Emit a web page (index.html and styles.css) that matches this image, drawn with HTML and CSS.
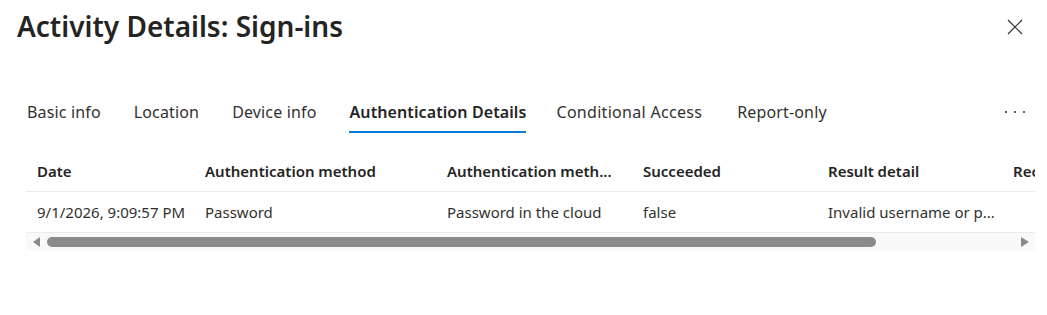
FILE: index.html
```html
<!DOCTYPE html>
<html lang="en">
<head>
<meta charset="utf-8">
<title>Activity Details: Sign-ins</title>
<link rel="stylesheet" href="styles.css">
</head>
<body>
<div class="panel">
  <header class="header">
    <h1 class="title">Activity Details: Sign-ins</h1>
    <button class="close" aria-label="Close">
      <svg width="16" height="16" viewBox="0 0 16 16"><path d="M1 1L15 15M15 1L1 15" stroke="#323130" stroke-width="1.2" fill="none"/></svg>
    </button>
  </header>
  <nav class="tabs">
    <span class="tab">Basic info</span>
    <span class="tab">Location</span>
    <span class="tab">Device info</span>
    <span class="tab active">Authentication Details</span>
    <span class="tab wide">Conditional Access</span>
    <span class="tab">Report-only</span>
    <span class="more"><i></i><i></i><i></i></span>
  </nav>
  <div class="grid">
    <div class="row head">
      <div class="c c1">Date</div>
      <div class="c c2">Authentication method</div>
      <div class="c c3">Authentication meth...</div>
      <div class="c c4">Succeeded</div>
      <div class="c c5">Result detail</div>
      <div class="c c6">Rec</div>
    </div>
    <div class="row body">
      <div class="c c1">9/1/2026, 9:09:57 PM</div>
      <div class="c c2">Password</div>
      <div class="c c3">Password in the cloud</div>
      <div class="c c4">false</div>
      <div class="c c5">Invalid username or p...</div>
      <div class="c c6"></div>
    </div>
    <div class="hscroll">
      <span class="arrow left"></span>
      <div class="track"><div class="thumb"></div></div>
      <span class="arrow right"></span>
    </div>
  </div>
</div>
</body>
</html>
```
FILE: styles.css
```css
html, body {
  margin: 0;
  padding: 0;
  background: #ffffff;
}
body {
  font-family: "Noto Sans", "Open Sans", sans-serif;
  color: #323130;
}
.panel {
  width: 1047px;
  height: 315px;
  overflow: hidden;
}
.header {
  display: flex;
  justify-content: space-between;
  align-items: flex-start;
  padding: 6px 24px 0 17px;
  height: 58px;
}
.title {
  margin: 0;
  font-size: 28px;
  font-weight: 600;
  color: #242424;
  line-height: 40px;
}
.close {
  border: 0;
  background: none;
  padding: 0;
  margin-top: 13px;
  width: 16px;
  height: 16px;
  display: flex;
}
.tabs {
  display: flex;
  align-items: stretch;
  margin: 29px 0 0 27px;
  height: 40px;
  width: 998px;
}
.tab {
  font-size: 16px;
  margin-right: 33px;
  line-height: 38px;
  border-bottom: 2px solid transparent;
  white-space: nowrap;
  letter-spacing: 0.15px;
}
.tab.active {
  font-weight: 600;
  color: #242424;
  letter-spacing: 0.1px;
  margin-right: 30px;
  border-bottom-color: #0f7bd8;
}
.tab.wide {
  letter-spacing: 0.3px;
  margin-right: 35px;
}
.more {
  margin-left: auto;
  display: flex;
  gap: 7px;
  align-items: center;
  padding-bottom: 2px;
}
.more i {
  width: 2px;
  height: 2px;
  background: #605e5c;
}
.grid {
  margin: 18px 0 0 26px;
  width: 1009px;
  overflow: hidden;
}
.row {
  display: flex;
  height: 40px;
  align-items: center;
  border-bottom: 1px solid #edebe9;
  font-size: 15px;
  width: 1009px;
}
.row.head {
  font-weight: 600;
  color: #242424;
}
.c {
  padding-left: 11px;
  box-sizing: border-box;
  white-space: nowrap;
  overflow: hidden;
  flex: none;
}
.c1 { width: 168px; }
.c2 { width: 242px; }
.c3 { width: 196px; }
.c4 { width: 185px; }
.c5 { width: 185px; }
.c6 { width: 33px; }
.hscroll {
  display: flex;
  align-items: center;
  height: 17px;
  background: #f9f9f9;
  width: 1009px;
}
.arrow {
  width: 0;
  height: 0;
  border-top: 5px solid transparent;
  border-bottom: 5px solid transparent;
  flex: none;
}
.arrow.left {
  border-right: 7px solid #8a8a8a;
  margin-left: 7px;
}
.arrow.right {
  border-left: 8px solid #8a8a8a;
  margin-right: 6px;
}
.track {
  flex: 1;
  height: 10px;
  margin: 0 8px 0 7px;
}
.thumb {
  width: 829px;
  height: 10px;
  border-radius: 5px;
  background: #8a8a8a;
}
```
